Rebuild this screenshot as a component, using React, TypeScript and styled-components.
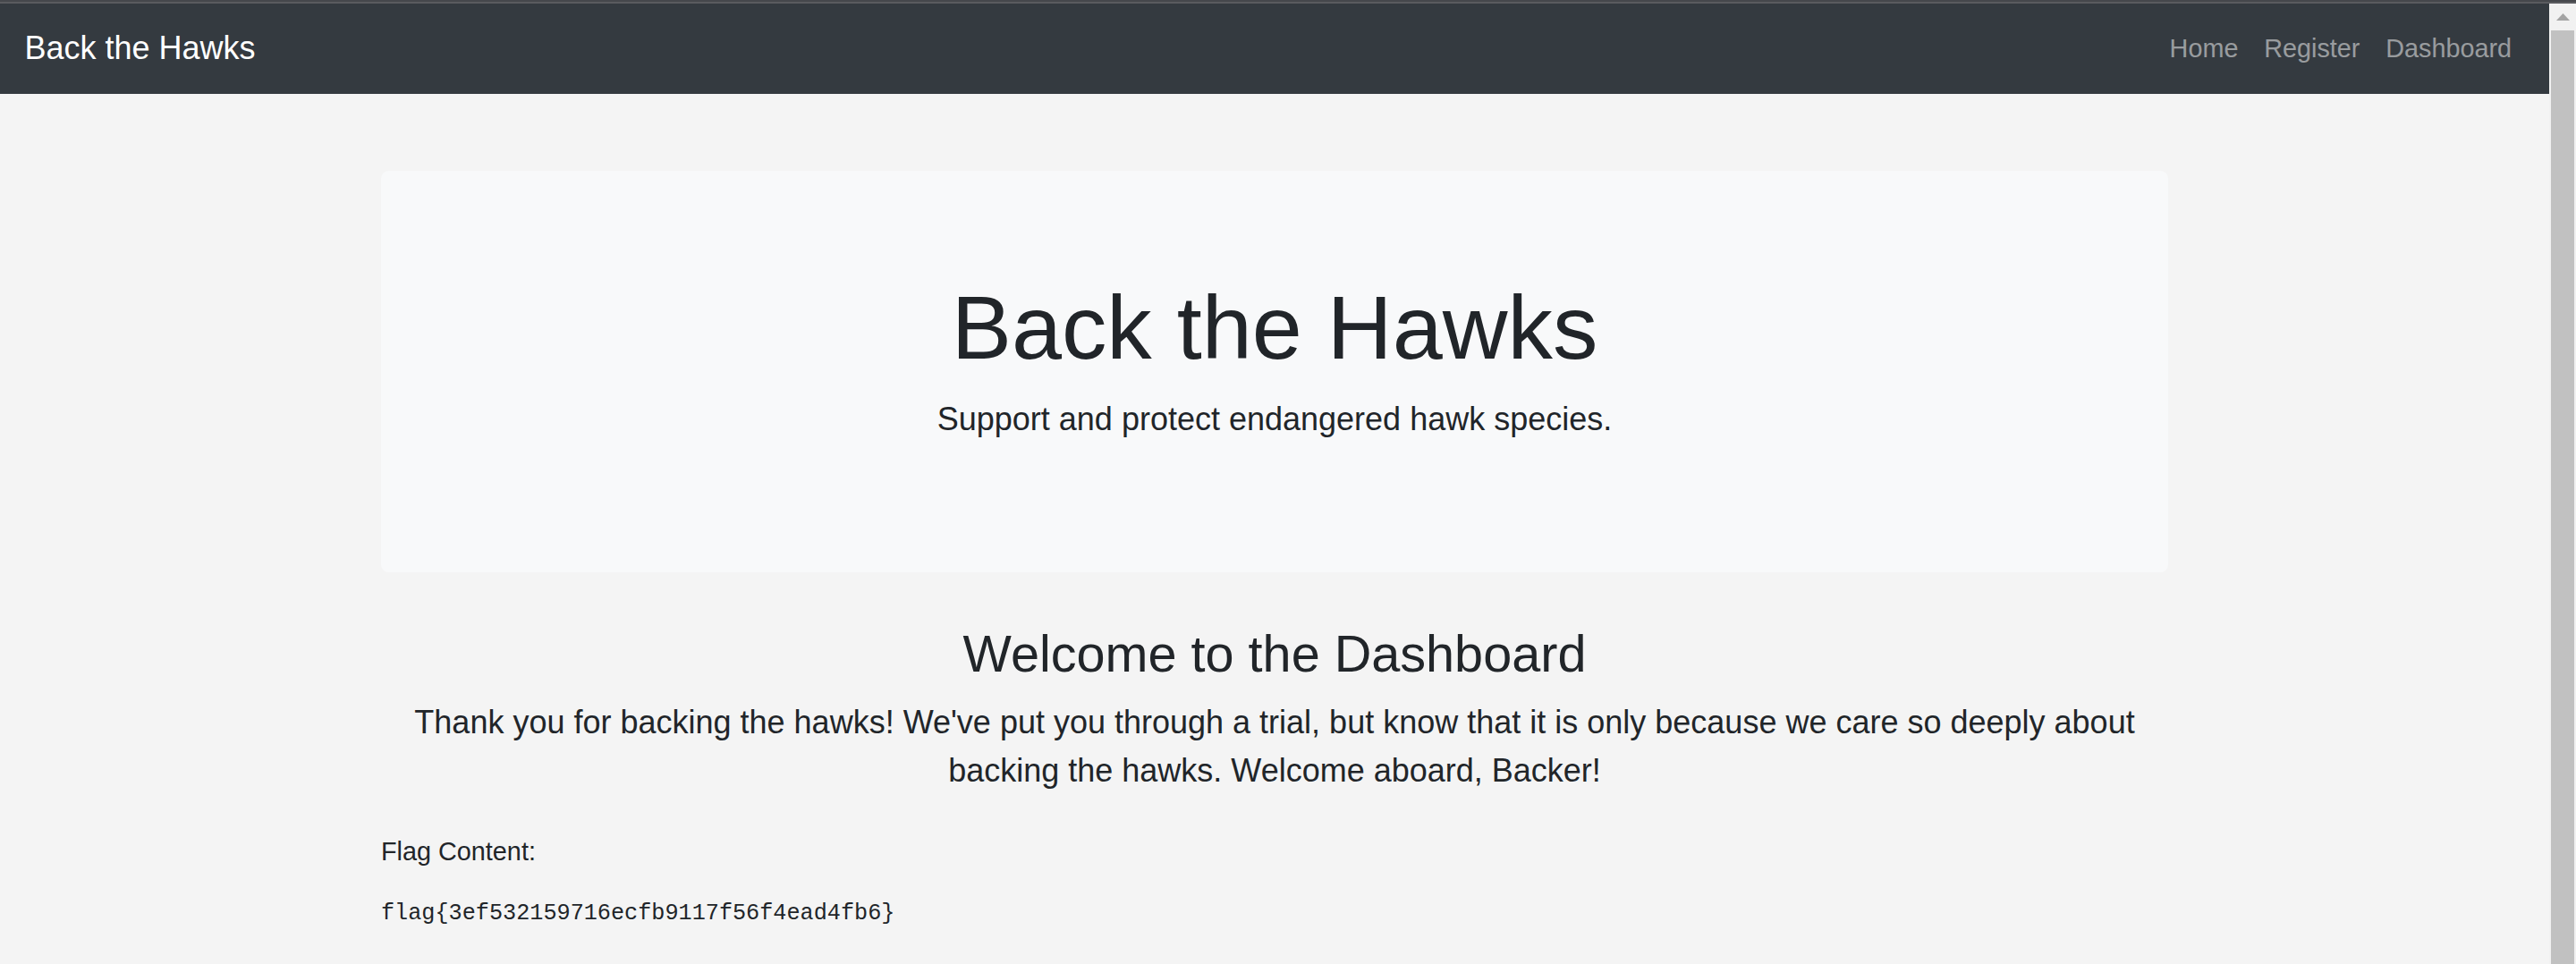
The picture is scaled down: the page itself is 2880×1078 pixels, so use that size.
import React from "react";
import styled, { createGlobalStyle } from "styled-components";

const GlobalStyle = createGlobalStyle`
  html, body {
    margin: 0;
    padding: 0;
    height: 100%;
    overflow: hidden;
  }
  body {
    background: #f4f4f4;
    color: #212529;
    font-family: "Liberation Sans", Arial, Helvetica, sans-serif;
  }
  * { box-sizing: border-box; }
`;

const Frame = styled.div`
  display: flex;
  flex-direction: column;
  width: 2880px;
  height: 1078px;
  overflow: hidden;
`;

const TopStrip = styled.div`
  flex: 0 0 4px;
  background: linear-gradient(#45474c 0 50%, #5a5b5f 50% 100%);
`;

const Viewport = styled.div`
  display: flex;
  flex: 1;
  min-height: 0;
`;

const Main = styled.main`
  flex: 1;
  min-width: 0;
  overflow: hidden;
  background: #f4f4f4;
`;

const Navbar = styled.nav`
  height: 100.8px;
  background: #343a40;
  display: flex;
  align-items: center;
  justify-content: space-between;
  padding: 0 27.5px;
`;

const Brand = styled.a`
  color: #fff;
  font-size: 36px;
  line-height: 1.5;
  text-decoration: none;
  white-space: nowrap;
`;

const NavList = styled.ul`
  display: flex;
  list-style: none;
  margin: 0;
  padding: 0;
`;

const NavLink = styled.a`
  display: block;
  padding: 0 14.4px;
  color: rgba(255, 255, 255, 0.5);
  font-size: 28.8px;
  line-height: 1.5;
  text-decoration: none;
`;

const Container = styled.div`
  width: 1998px;
  margin: 86.4px auto 0;
`;

const Jumbotron = styled.section`
  background: #f8f9fa;
  border-radius: 8.64px;
  padding: 115.2px 57.6px;
  margin-bottom: 57.6px;
  text-align: center;
`;

const DisplayTitle = styled.h1`
  margin: 0 0 14.4px;
  font-size: 100.8px;
  font-weight: 300;
  line-height: 1.2;
`;

const Lead = styled.p<{ $gap: number }>`
  margin: 0 0 ${(p) => p.$gap}px;
  font-size: 36px;
  font-weight: 300;
  line-height: 1.5;
`;

const Welcome = styled.div`
  text-align: center;
`;

const SectionTitle = styled.h2`
  margin: 0 0 14.4px;
  font-size: 57.6px;
  font-weight: 400;
  line-height: 1.2;
`;

const Label = styled.p`
  margin: 0 0 28.8px;
  font-size: 28.8px;
  line-height: 1.5;
`;

const FlagCode = styled.pre`
  margin: 0;
  font-family: "Liberation Mono", "Courier New", monospace;
  font-size: 25.2px;
  line-height: 1.5;
  color: #212529;
`;

const Scrollbar = styled.div`
  flex: 0 0 30px;
  display: flex;
  flex-direction: column;
  background: #f1f1f1;
`;

const ScrollButton = styled.div`
  flex: 0 0 30px;
  display: flex;
  align-items: center;
  justify-content: center;
`;

const ScrollThumb = styled.div`
  flex: 1;
  margin: 0 2px;
  background: #c1c1c1;
`;

export default function App() {
  return (
    <>
      <GlobalStyle />
      <Frame>
        <TopStrip />
        <Viewport>
          <Main>
            <Navbar>
              <Brand href="#">Back the Hawks</Brand>
              <NavList>
                <li><NavLink href="#">Home</NavLink></li>
                <li><NavLink href="#">Register</NavLink></li>
                <li><NavLink href="#">Dashboard</NavLink></li>
              </NavList>
            </Navbar>
            <Container>
              <Jumbotron>
                <DisplayTitle>Back the Hawks</DisplayTitle>
                <Lead $gap={28.8}>Support and protect endangered hawk species.</Lead>
              </Jumbotron>
              <Welcome>
                <SectionTitle>Welcome to the Dashboard</SectionTitle>
                <Lead $gap={42.4}>
                  Thank you for backing the hawks! We've put you through a trial, but know that it is only because we care so deeply about backing the hawks. Welcome aboard, Backer!
                </Lead>
              </Welcome>
              <Label>Flag Content:</Label>
              <FlagCode>flag{"{"}3ef532159716ecfb9117f56f4ead4fb6{"}"}</FlagCode>
            </Container>
          </Main>
          <Scrollbar>
            <ScrollButton>
              <svg width="15" height="8" viewBox="0 0 15 8">
                <polygon points="7.5,0 15,8 0,8" fill="#a3a3a3" />
              </svg>
            </ScrollButton>
            <ScrollThumb />
          </Scrollbar>
        </Viewport>
      </Frame>
    </>
  );
}
